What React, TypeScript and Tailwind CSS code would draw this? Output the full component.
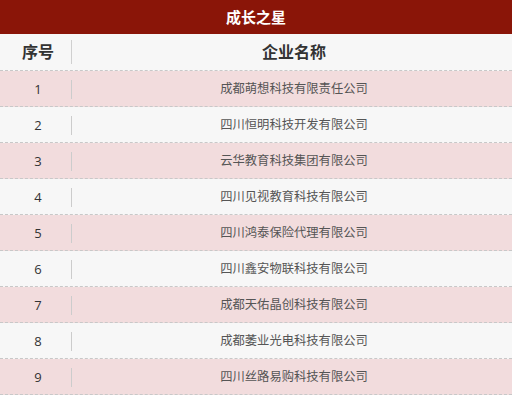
const companies = [
  '成都萌想科技有限责任公司',
  '四川恒明科技开发有限公司',
  '云华教育科技集团有限公司',
  '四川见视教育科技有限公司',
  '四川鸿泰保险代理有限公司',
  '四川鑫安物联科技有限公司',
  '成都天佑晶创科技有限公司',
  '成都萎业光电科技有限公司',
  '四川丝路易购科技有限公司',
]

export default function App() {
  return (
    <div className="w-[512px] bg-white font-['Open_Sans','Noto_Sans_CJK_SC',sans-serif]">
      <div className="flex h-[34px] items-center justify-center bg-[#8a1508] text-[15px] font-bold text-white">
        成长之星
      </div>
      <div className="flex h-[37px] items-center border-b border-dashed border-[#c8c8c8] bg-[#f7f7f7] text-[16px] font-bold text-[#333]">
        <div className="w-[71px] pl-[5px] text-center">序号</div>
        <div className="h-[24px] w-px bg-[#d0d0d0]" />
        <div className="flex-1 pl-[4px] text-center">企业名称</div>
      </div>
      {companies.map((name, i) => (
        <div
          key={name}
          className={
            'flex h-[36px] items-center border-b border-dashed border-[#c8c8c8] pt-[2px] ' +
            (i % 2 === 0 ? 'bg-[#f2dcdd]' : 'bg-[#f7f7f7]')
          }
        >
          <div className="w-[71px] pl-[5px] text-center text-[13px] text-[#333]">{i + 1}</div>
          <div className="h-[19px] w-px bg-[#cccccc]" />
          <div className="flex-1 pl-[4px] text-center text-[12.3px] text-[#555]">{name}</div>
        </div>
      ))}
    </div>
  )
}
